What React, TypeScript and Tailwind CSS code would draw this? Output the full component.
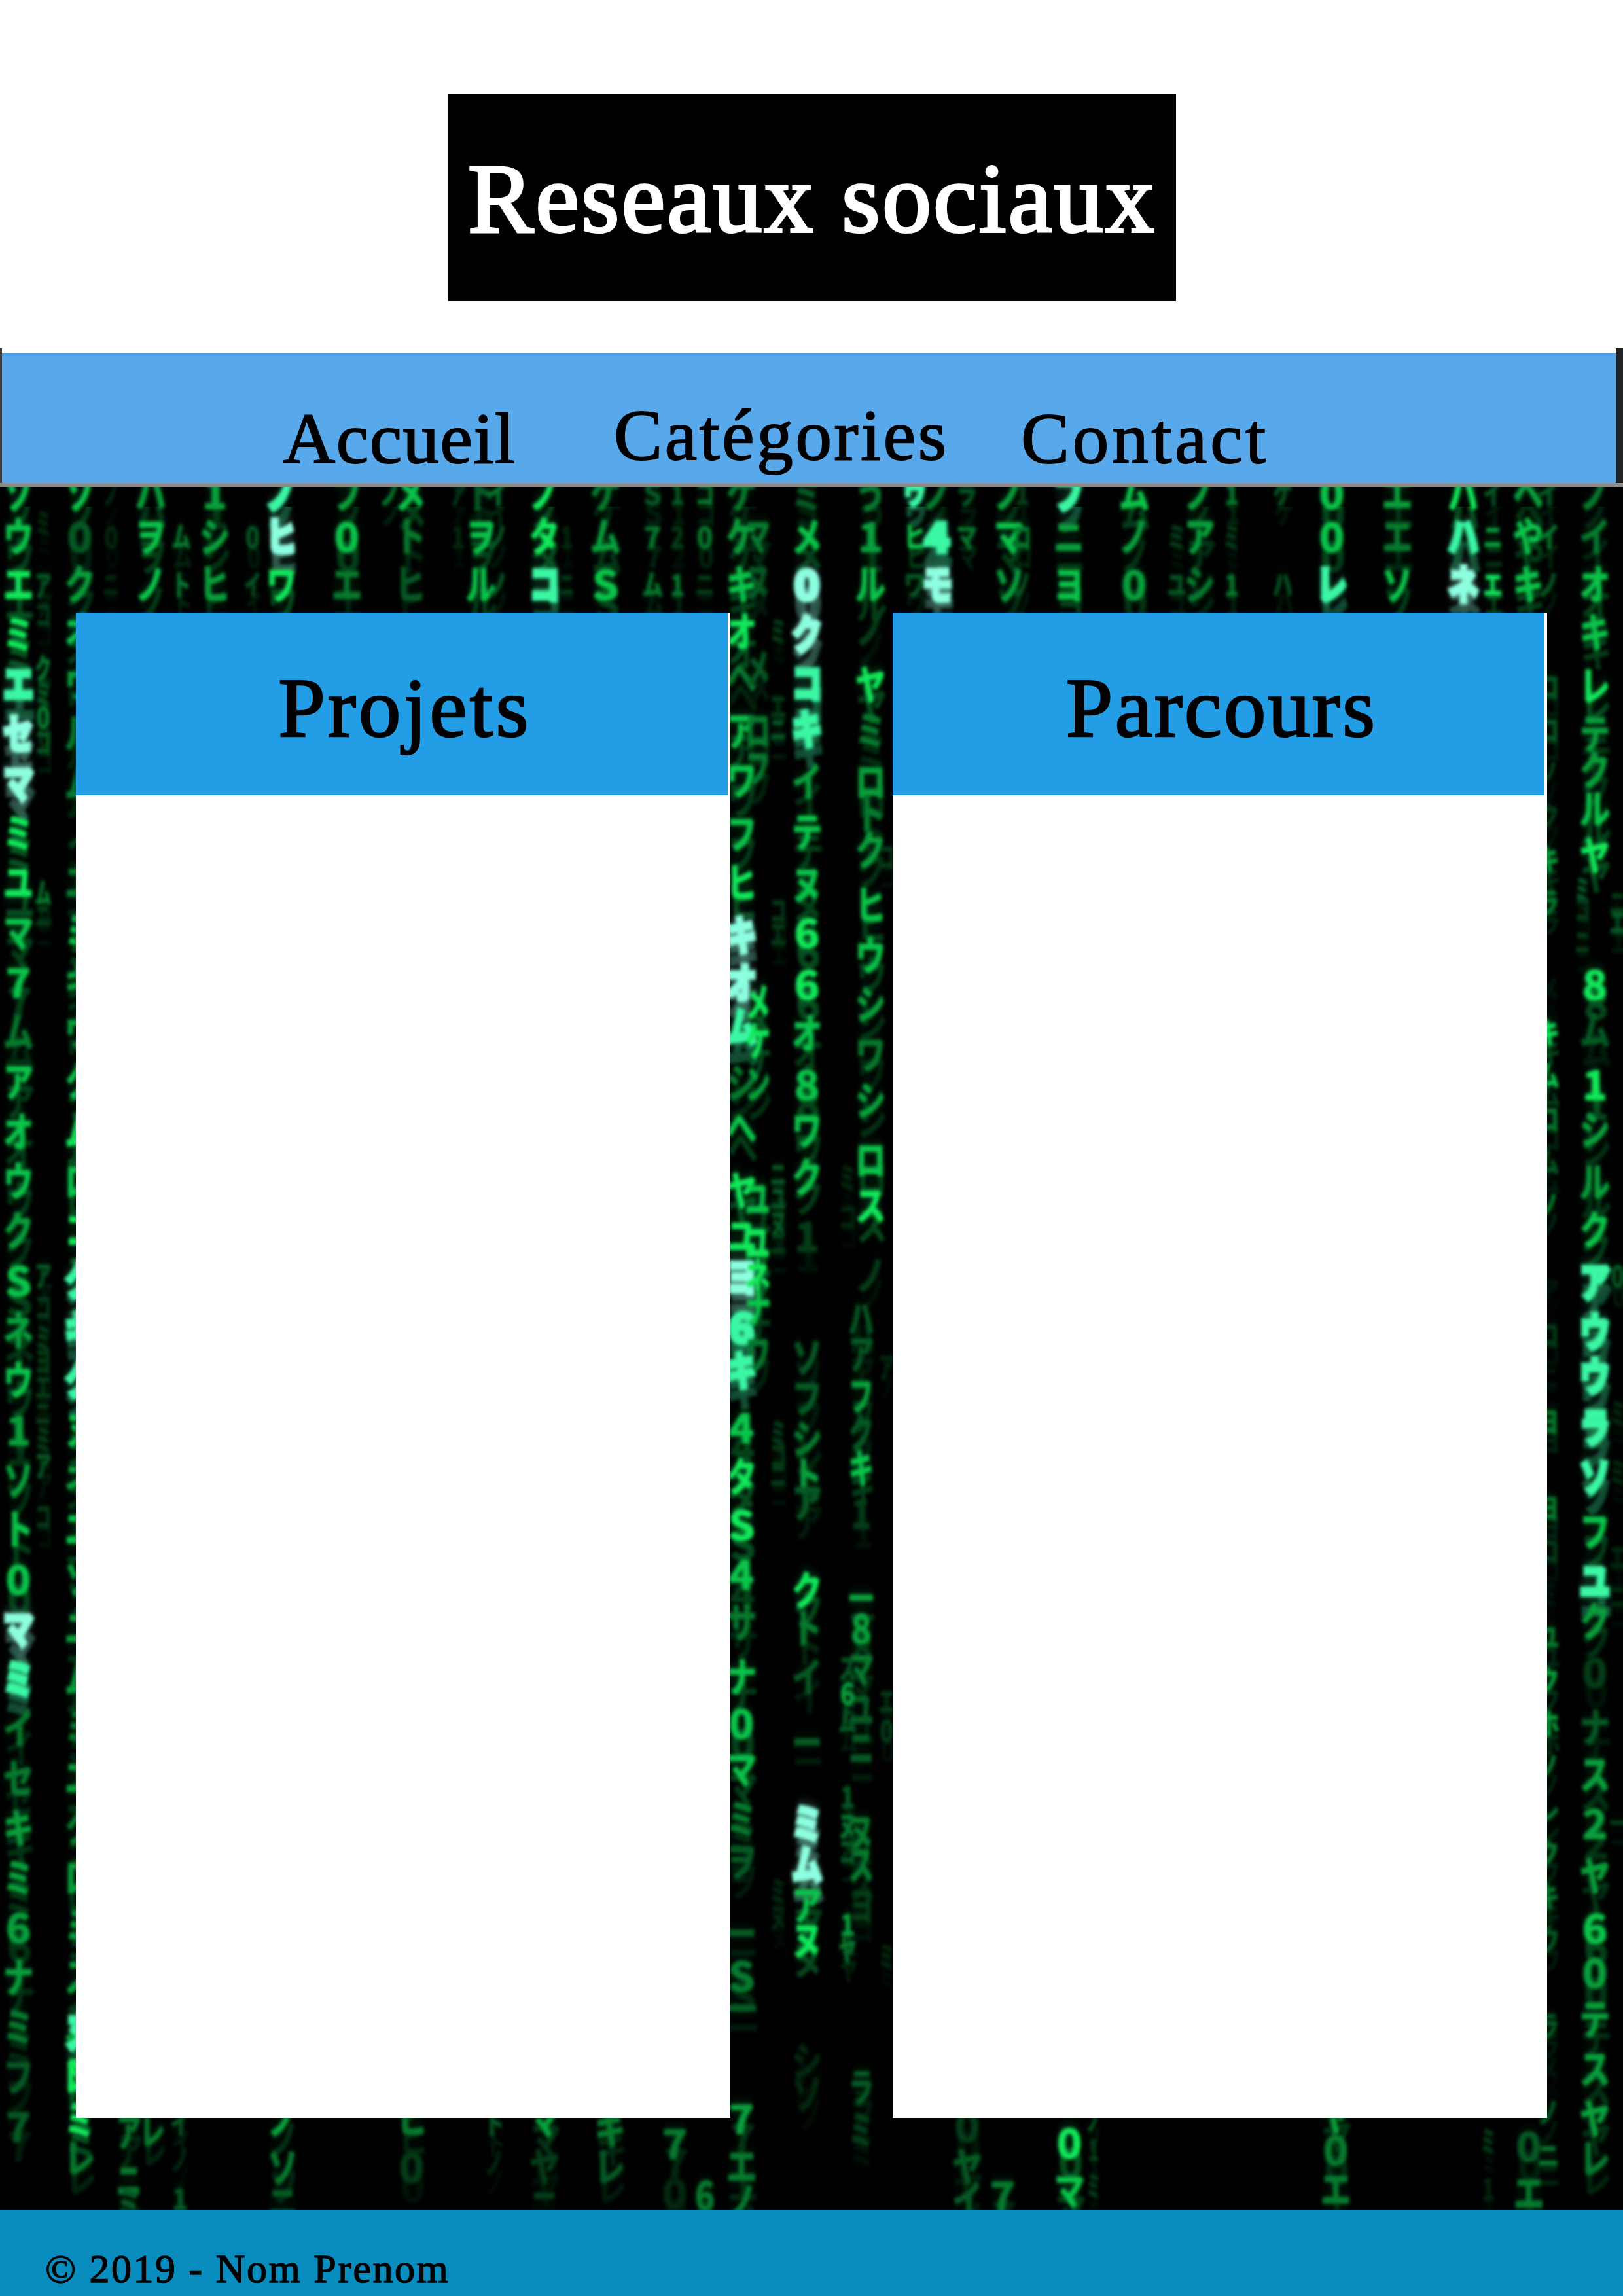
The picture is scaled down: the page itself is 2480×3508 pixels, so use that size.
import React from "react";

/* One falling column of the code rain: centre x and [glyph, centre y, brightness 0-9] entries. */
type Glyph = [string, number, number];
type Column = { x: number; w?: number; glyphs: Glyph[] };

const SHADES = [
  "#02180b",
  "#04290f",
  "#053d18",
  "#065a24",
  "#077a2e",
  "#09a03c",
  "#0bc44a",
  "#12e85a",
  "#3bf7a4",
  "#8dffe0",
];

/* Evenly spaced run of glyphs. */
const run = (y: number, step: number, text: string, levels: string): Glyph[] =>
  Array.from(text).map((c, i): Glyph => [c, y + i * step, Number(levels[i] ?? "0")]);

/* Three glyphs that hang below the navigation bar. */
const top3 = (text: string, levels: string): Glyph[] => {
  const ys = [755, 821, 894, 966];
  return Array.from(text).map((c, i): Glyph => [c, ys[i], Number(levels[i] ?? "0")]);
};

const COLUMNS: Column[] = [
  {
    x: 28,
    glyphs: [
      ...top3("ソウエ", "667"),
      ...run(970, 76, "ミエセマミユマ7ムアオウクSネウ1ソト0マミイセキミ6ナミフ7", "7899776646665656556698445555433"),
    ],
  },
  { x: 66, w: 24, glyphs: [["ミ", 800, 1], ["ア", 895, 3], ["コ", 940, 2], ["ク", 1022, 4], ["ミ", 1060, 3], ["0", 1096, 4], ["コ", 1135, 3], ["ム", 1365, 4], ["ニ", 1400, 2], ["ア", 1950, 3], ["コ", 1998, 2], ["ミ", 2045, 2], ["ヨ", 2080, 2], ["エ", 2120, 2], ["ニ", 2160, 2], ["ミ", 2200, 2], ["ア", 2240, 3], ["コ", 2318, 2]] },
  {
    x: 122,
    glyphs: [
      ...top3("ソ0クオ", "6356"),
      ...run(1045, 76, "ウルムノエミキウクムロコクキクヌネエソユムミエクロミスムロ", "54424655676788865655545455557"),
      ["ヌ", 3105, 8],
      ["ヌ", 3170, 7],
      ["ミ", 3240, 7],
      ["レ", 3298, 4],
    ],
  },
  { x: 170, w: 24, glyphs: top3("ノ0ニ", "111") },
  { x: 230, glyphs: top3("ハヲノ", "566") },
  { x: 277, w: 28, glyphs: top3(" ムト", "144") },
  { x: 328, glyphs: top3("1シヒ", "555") },
  { x: 386, w: 24, glyphs: top3(" 0イ", "133") },
  { x: 430, glyphs: top3("ノヒワ1", "8976") },
  { x: 530, glyphs: top3("フ0エ", "564") },
  { x: 596, w: 30, glyphs: top3("ノ", "4") },
  { x: 627, glyphs: top3("メトヒ", "643") },
  { x: 700, w: 24, glyphs: top3("ア1", "21") },
  { x: 735, glyphs: top3("トヲル", "366") },
  { x: 760, w: 30, glyphs: top3("イノノ", "433") },
  { x: 832, glyphs: top3("ノタコ", "778") },
  { x: 866, w: 22, glyphs: top3(" 1ニ", "012") },
  { x: 925, glyphs: top3("ケムS", "456") },
  { x: 997, w: 30, glyphs: top3("S7ム", "344") },
  { x: 1035, w: 24, glyphs: top3("121", "324") },
  { x: 1077, w: 28, glyphs: top3("コ0ニ", "442") },
  {
    x: 1133,
    glyphs: [
      ...top3("ケケキオ", "4567"),
      ["ヘ", 1036, 4], ["ア", 1118, 6], ["ワ", 1193, 6], ["フ", 1275, 6], ["ヒ", 1350, 7], ["キ", 1430, 9], ["オ", 1503, 9], ["ム", 1570, 8], ["シ", 1655, 4], ["へ", 1724, 6], ["ヤ", 1820, 7], ["ユ", 1890, 7], ["ヨ", 1952, 9], ["6", 2029, 8], ["キ", 2095, 8], ["4", 2182, 6], ["タ", 2257, 7], ["S", 2331, 7], ["4", 2406, 6], ["サ", 2480, 4], ["ナ", 2563, 6], ["0", 2634, 6], ["マ", 2704, 6], ["ミ", 2780, 4], ["ヲ", 2845, 3], ["ー", 2955, 3], ["S", 3020, 4], ["一", 3070, 3], ["7", 3238, 5], ["エ", 3311, 4], ["ノ", 3365, 4],
    ],
  },
  {
    x: 1158,
    w: 36,
    glyphs: [["マ", 820, 4], ["ヌ", 890, 3], ["メ", 1022, 3], ["ロ", 1117, 4], ["フ", 1175, 4], ["メ", 1532, 7], ["ケ", 1592, 7], ["ン", 1657, 5], ["ユ", 1833, 6], ["ユ", 1900, 7], ["ネ", 1952, 7], ["ナ", 2000, 6], ["ワ", 2070, 4]],
  },
  { x: 1189, w: 24, glyphs: [["ミ", 965, 2], ["エ", 1080, 2], ["ニ", 1115, 3], ["コ", 1392, 2], ["エ", 1428, 2], ["ニ", 1795, 3], ["ユ", 1832, 3], ["ヌ", 1870, 3], ["ニ", 1900, 2], ["ミ", 2190, 2], ["コ", 2225, 2], ["ニ", 2255, 2], ["ミ", 2890, 1], ["ヌ", 2930, 1]] },
  {
    x: 1233,
    glyphs: [
      ...top3("ミメ0", "369"),
      ["ク", 970, 9], ["コ", 1045, 8], ["キ", 1115, 8], ["イ", 1195, 5], ["テ", 1272, 6], ["ヌ", 1352, 6], ["6", 1426, 7], ["6", 1505, 7], ["オ", 1580, 6], ["8", 1658, 6], ["ワ", 1728, 6], ["ク", 1800, 6], ["1", 1890, 2], ["ソ", 2074, 3], ["フ", 2137, 3], ["シ", 2199, 4], ["ト", 2257, 5], ["ア", 2297, 3], ["ク", 2431, 7], ["ト", 2489, 4], ["イ", 2563, 3], ["ー", 2663, 3], ["ミ", 2787, 9], ["ム", 2850, 9], ["ア", 2912, 6], ["ヌ", 2965, 7], ["シ", 3150, 1], ["ソ", 3200, 1],
    ],
  },
  {
    x: 1330,
    glyphs: [
      ...top3("う1ル", "456"),
      ["ノ", 962, 2], ["ヤ", 1047, 7], ["ミ", 1117, 4], ["ロ", 1195, 5], ["ト", 1245, 4], ["ク", 1300, 5], ["ヒ", 1384, 6], ["ウ", 1461, 6], ["シ", 1535, 5], ["ワ", 1612, 4], ["シ", 1682, 5], ["ロ", 1773, 6], ["ス", 1843, 7], ["ノ", 1950, 2],
    ],
  },
  {
    x: 1316,
    w: 36,
    glyphs: [["ハ", 2016, 3], ["ア", 2070, 3], ["フ", 2134, 5], ["ク", 2190, 3], ["キ", 2244, 6], ["1", 2313, 2], ["一", 2443, 5], ["8", 2489, 5], ["マ", 2551, 4], ["ユ", 2613, 3], ["ニ", 2671, 3], ["ヌ", 2800, 4], ["ス", 2850, 4], ["ヨ", 2912, 2], ["ラ", 3190, 3], ["ミ", 3255, 2]],
  },
  { x: 1295, w: 26, glyphs: [["6", 2588, 5], ["ス", 2550, 3], ["ム", 2630, 3], ["1", 2746, 3], ["ヌ", 2790, 4], ["コ", 2830, 3], ["1", 2941, 5], ["ヤ", 2980, 4], ["ミ", 1800, 1], ["コ", 1860, 1]] },
  { x: 1355, w: 24, glyphs: [["コ", 1310, 2], ["ア", 2090, 1], ["エ", 2600, 2], ["0", 2645, 2], ["ミ", 2990, 1]] },
  { x: 1398, w: 32, glyphs: top3("ウヒワ", "863") },
  { x: 1432, glyphs: top3("ノ4モ", "489") },
  { x: 1477, w: 30, glyphs: top3("ラマ", "34") },
  { x: 1542, glyphs: top3("ノマソ", "565") },
  { x: 1562, w: 26, glyphs: top3("1ロノ", "243") },
  { x: 1633, glyphs: top3("フニヨ", "856") },
  { x: 1733, glyphs: top3("ムノ0", "655") },
  { x: 1798, w: 28, glyphs: top3(" ミユ", "023") },
  { x: 1833, glyphs: top3("ノアシ", "554") },
  { x: 1882, w: 24, glyphs: top3("1ミ1", "424") },
  { x: 1960, w: 28, glyphs: top3("ケ ハ", "303") },
  { x: 2035, glyphs: top3("00レ", "668") },
  { x: 2135, glyphs: top3("エエソ", "546") },
  { x: 2236, glyphs: top3("パハネ", "789") },
  { x: 2281, w: 28, glyphs: top3("イニエ", "357") },
  { x: 2335, glyphs: top3("ヘやキ", "566") },
  {
    x: 2366,
    w: 32,
    glyphs: [
      ...top3("イイノ", "343"),
      ...run(1050, 66, "ロロノクキラ メキムロムノ アコニヨ ヨロミユクホノレクキウ ラメノニ", "33225450764343020444204554444343034442"),
    ],
  },
  {
    x: 2437,
    glyphs: [
      ...top3("ノイオ", "446"),
      ["キ", 967, 6], ["レ", 1049, 7], ["テ", 1122, 5], ["ク", 1178, 5], ["ル", 1237, 6], ["ヤ", 1308, 7], ["8", 1505, 7], ["ム", 1575, 3], ["1", 1658, 7], ["シ", 1727, 5], ["ル", 1807, 5], ["ク", 1880, 6], ["ア", 1960, 8], ["ウ", 2036, 8], ["ウ", 2104, 8], ["ラ", 2182, 8], ["ソ", 2257, 8], ["フ", 2341, 6], ["ユ", 2417, 8], ["ク", 2478, 5], ["0", 2556, 2], ["ナ", 2640, 3], ["ス", 2712, 5], ["2", 2787, 5], ["ヤ", 2867, 5], ["6", 2947, 6], ["0", 3015, 5], ["テ", 3086, 5], ["ス", 3162, 5], ["ヤ", 3238, 5], ["レ", 3299, 4],
    ],
  },
  { x: 2418, w: 22, glyphs: [["ミ", 1360, 3], ["コ", 1390, 2], ["ニ", 1440, 2]] },
  { x: 2472, w: 24, glyphs: [["ニ", 1380, 2], ["エ", 1410, 3], ["0", 1950, 3], ["ミ", 2160, 1], ["ミ", 2250, 1], ["エ", 2380, 1], ["ニ", 2440, 1], ["一", 2786, 2]] },
  { x: 197, w: 36, glyphs: [["ア", 3258, 4], ["ニ", 3332, 4], ["ミ", 3370, 3]] },
  { x: 233, w: 36, glyphs: [["レ", 3255, 4]] },
  { x: 275, w: 28, glyphs: [["イ", 3245, 3], ["ノ", 3300, 1], ["1", 3360, 3]] },
  { x: 432, glyphs: [["ノ", 3240, 5], ["ソ", 3312, 4], ["ニ", 3366, 3]] },
  { x: 629, glyphs: [["ヒ", 3238, 4], ["0", 3312, 2]] },
  { x: 755, w: 28, glyphs: [["ト", 3245, 3], ["ノ", 3305, 1]] },
  { x: 832, glyphs: [["マ", 3240, 5], ["ヤ", 3312, 2], ["ニ", 3370, 2]] },
  { x: 932, glyphs: [["キ", 3254, 4], ["レ", 3312, 3]] },
  { x: 1031, glyphs: [["7", 3276, 4], ["0", 3352, 1]] },
  { x: 1077, w: 34, glyphs: [["6", 3355, 4]] },
  { x: 1478, glyphs: [["0", 3250, 2], ["ヤ", 3312, 3], ["イ", 3362, 3]] },
  { x: 1532, glyphs: [["7", 3356, 4]] },
  { x: 1634, glyphs: [["0", 3275, 7], ["マ", 3348, 6]] },
  { x: 1671, w: 20, glyphs: [["ノ", 3240, 3], ["1", 3285, 2], ["ミ", 3340, 2]] },
  { x: 2041, glyphs: [["ヤ", 3234, 5], ["0", 3286, 4], ["エ", 3346, 4]] },
  { x: 2274, w: 22, glyphs: [["ミ", 3272, 2], ["1", 3345, 1]] },
  { x: 2336, glyphs: [["0", 3280, 3], ["エ", 3352, 4]] },
];

const TOP = 744;

function Rain() {
  const glyphs = COLUMNS.flatMap((col, c) =>
    col.glyphs
      .filter(([g]) => g !== " ")
      .map(([g, y, level], i) => {
        const w = col.w ?? 44;
        const latin = g.charCodeAt(0) < 128;
        const sx = latin ? w / 36 : w / 50;
        const sy = w < 34 ? 0.85 : 1.18;
        return (
          <text
            key={`${c}-${i}`}
            transform={`translate(${col.x} ${y - TOP + 19 * sy}) scale(${sx} ${sy})`}
            textAnchor="middle"
            fill={SHADES[level]}
            stroke={SHADES[level]}
            strokeWidth={level > 7 ? 6 : 1.5}
          >
            {g}
          </text>
        );
      }),
  );
  return (
    <svg
      aria-hidden="true"
      className="absolute inset-0 h-full w-full font-['Noto_Sans_CJK_JP',sans-serif] text-[52px] font-bold"
      viewBox="0 0 2480 2632"
    >
      <defs>
        <filter id="soft" x="0" y="0" width="2480" height="2632" filterUnits="userSpaceOnUse" colorInterpolationFilters="sRGB">
          <feGaussianBlur in="SourceGraphic" stdDeviation="4 10" result="halo" />
          <feGaussianBlur in="SourceGraphic" stdDeviation="2.8" result="core" />
          <feOffset in="core" dx="2" dy="30" result="shifted" />
          <feComponentTransfer in="shifted" result="ghost">
            <feFuncA type="linear" slope="0.3" />
          </feComponentTransfer>
          <feComponentTransfer in="halo" result="dimHalo">
            <feFuncA type="linear" slope="0.4" />
          </feComponentTransfer>
          <feMerge>
            <feMergeNode in="dimHalo" />
            <feMergeNode in="ghost" />
            <feMergeNode in="core" />
          </feMerge>
        </filter>
      </defs>
      <g filter="url(#soft)">{glyphs}</g>
    </svg>
  );
}

function Card({ title, className }: { title: string; className: string }) {
  return (
    <section className="relative h-[2300px] w-[1000px] bg-white">
      <div className="flex h-[279px] w-[996px] items-center justify-center bg-[#239de5] pt-[12px] pl-[9px]">
        <h2 className={className}>{title}</h2>
      </div>
    </section>
  );
}

export default function App() {
  return (
    <div className="flex h-[3508px] w-[2480px] flex-col overflow-hidden bg-white font-['Liberation_Serif',serif] text-black">
      <header className="flex h-[532px] shrink-0 justify-center pt-[144px] pl-[2px]">
        <div className="flex h-[316px] w-[1112px] items-center justify-center bg-black pt-[2px]">
          <h1 className="text-[150px] leading-none tracking-[3.2px] whitespace-nowrap text-white [-webkit-text-stroke:4px_#fff]">
            Reseaux sociaux
          </h1>
        </div>
      </header>

      <div className="flex h-[206px] shrink-0">
        <div className="w-[3px] bg-[#3d3d40]" />
        <nav className="mt-[8px] flex grow border-t-[4px] border-[#4ba1e8] bg-[#58a9ec] pt-[70px] pl-[429px] text-[111px] leading-none whitespace-nowrap [-webkit-text-stroke:2px_#000]">
          <a className="w-[506px] tracking-[1.6px]">Accueil</a>
          <a className="-mt-[5px] w-[622px] tracking-[3.7px]">Catégories</a>
          <a className="tracking-[4.8px]">Contact</a>
        </nav>
        <div className="w-[11px] bg-[#222224]" />
      </div>
      <div className="h-[6px] shrink-0 bg-linear-to-b from-[#929092] to-[#868686]" />

      <main className="relative flex h-[2632px] shrink-0 gap-[248px] overflow-hidden bg-black pt-[192px] pl-[116px]">
        <Rain />
        <Card title="Projets" className="text-[129px] leading-none tracking-[4px] [-webkit-text-stroke:2.5px_#000]" />
        <Card title="Parcours" className="text-[129px] leading-none tracking-[3px] [-webkit-text-stroke:2.5px_#000]" />
      </main>

      <footer className="h-[132px] shrink-0 bg-[#098dbf] pt-[59px] pl-[69px]">
        <p className="text-[62px] leading-none tracking-[2.5px] whitespace-nowrap [-webkit-text-stroke:1.4px_#000]">
          © 2019 - Nom Prenom
        </p>
      </footer>
    </div>
  );
}
